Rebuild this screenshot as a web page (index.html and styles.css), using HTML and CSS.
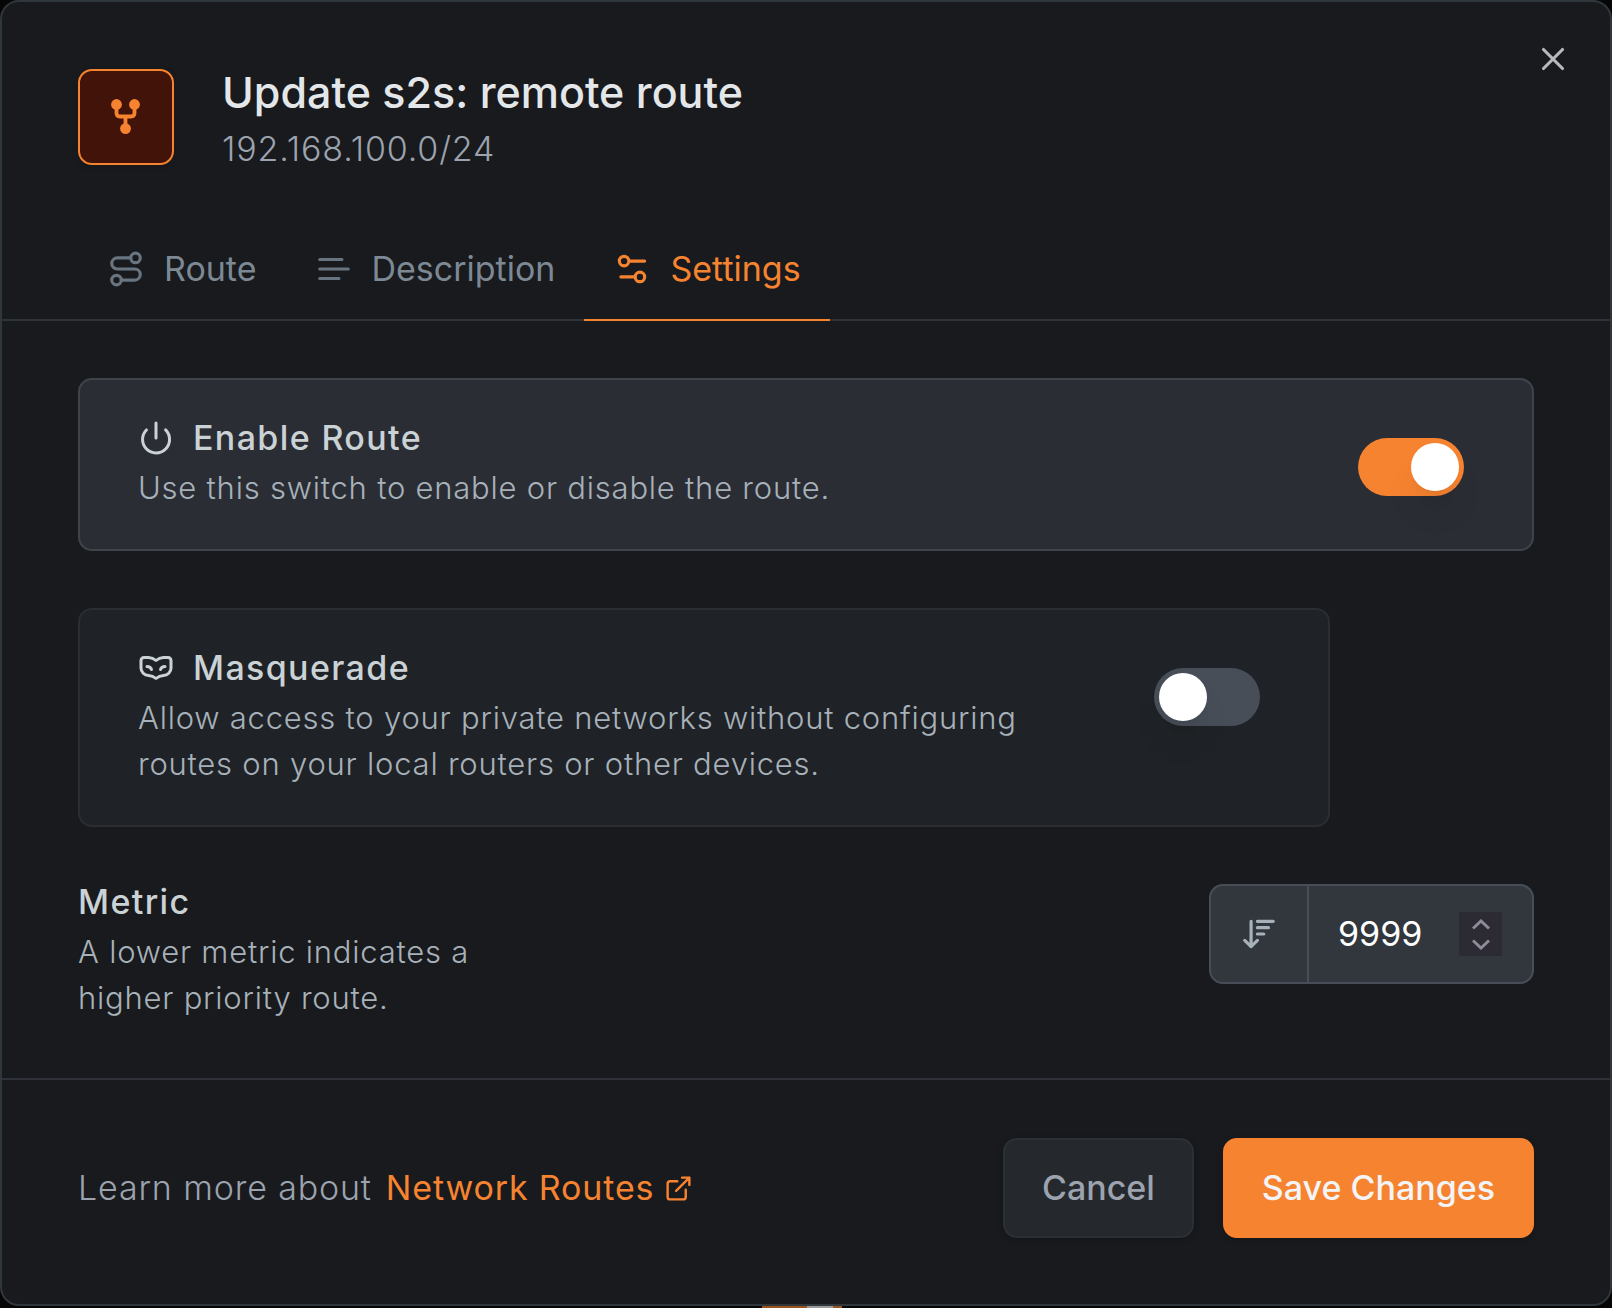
FILE: index.html
```html
<!DOCTYPE html>
<html lang="en">
<head>
<meta charset="utf-8">
<meta name="viewport" content="width=device-width, initial-scale=1">
<title>Update s2s: remote route</title>
<link rel="stylesheet" href="styles.css">
</head>
<body>
<main class="dialog" role="dialog" aria-labelledby="dialog-title">
  <button class="close" type="button" aria-label="Close">
    <svg class="icon icon-lg" viewBox="0 0 24 24"><path d="M18 6 6 18M6 6l12 12"/></svg>
  </button>

  <header class="header">
    <div class="badge">
      <svg class="fork" viewBox="0 0 30 36">
        <path d="M5.500 6V14Q5.500 17.500 9 17.500H20Q23.500 17.500 23.500 14V6M14.500 17.500V30" fill="none" stroke="currentColor" stroke-width="3.800"/>
        <circle cx="5.500" cy="5.500" r="5.400" fill="currentColor"/>
        <circle cx="23.500" cy="5.500" r="5.400" fill="currentColor"/>
        <circle cx="14.500" cy="29.600" r="5.400" fill="currentColor"/>
      </svg>
    </div>
    <div>
      <h1 class="title" id="dialog-title">Update s2s: remote route</h1>
      <p class="subtitle">192.168.100.0/24</p>
    </div>
  </header>

  <div class="tabs" role="tablist">
    <button class="tab" type="button" role="tab">
      <svg class="icon icon-lg" viewBox="0 0 24 24"><circle cx="6" cy="19" r="3"/><path d="M9 19h8.500a3.500 3.500 0 0 0 0-7h-11a3.500 3.500 0 0 1 0-7H15"/><circle cx="18" cy="5" r="3"/></svg>
      Route
    </button>
    <button class="tab" type="button" role="tab">
      <svg class="icon icon-lg" viewBox="0 0 24 24"><path d="M17 6H3M21 12H3M15.100 18H3"/></svg>
      Description
    </button>
    <button class="tab tab-active" type="button" role="tab" aria-selected="true">
      <svg class="icon icon-lg" viewBox="0 0 24 24"><path d="M20 7h-9M14 17H5"/><circle cx="17" cy="17" r="3"/><circle cx="7" cy="7" r="3"/></svg>
      Settings
    </button>
  </div>

  <section class="body">
    <div class="card card-on">
      <div class="card-text">
        <label class="label" for="enable-route">
          <svg class="icon icon-md" viewBox="0 0 24 24"><path d="M12 2v10M18.400 6.600a9 9 0 1 1-12.770.040"/></svg>
          Enable Route
        </label>
        <p class="help">Use this switch to enable or disable the route.</p>
      </div>
      <input class="switch" type="checkbox" role="switch" id="enable-route" checked>
    </div>

    <div class="card card-off">
      <div class="card-text">
        <label class="label" for="masquerade">
          <svg class="icon icon-md" viewBox="0 0 24 24"><path d="M2 12a5 5 0 0 0 5 5 8 8 0 0 1 5 2 8 8 0 0 1 5-2 5 5 0 0 0 5-5V7a2 2 0 0 0-2-2h-3a8 8 0 0 0-5 2 8 8 0 0 0-5-2H4a2 2 0 0 0-2 2Z"/><path d="M6 11c1.500 0 2.500.500 3 2M18 11c-1.500 0-2.500.500-3 2"/></svg>
          Masquerade
        </label>
        <p class="help">Allow access to your private networks without configuring routes on your local routers or other devices.</p>
      </div>
      <input class="switch" type="checkbox" role="switch" id="masquerade">
    </div>

    <div class="metric">
      <div class="metric-text">
        <label class="label" for="metric">Metric</label>
        <p class="help">A lower metric indicates a higher priority route.</p>
      </div>
      <div class="number">
        <span class="prefix">
          <svg class="icon icon-lg" viewBox="0 0 24 24"><path d="m3 16 4 4 4-4M7 20V4M11 4h10M11 8h7M11 12h4"/></svg>
        </span>
        <input class="number-input" type="number" id="metric" value="9999">
        <span class="stepper">
          <button class="step" type="button" aria-label="Increase"><svg class="chevron" viewBox="0 0 18 11"><path d="M1 9.500 9 2l8 7.500"/></svg></button>
          <button class="step" type="button" aria-label="Decrease"><svg class="chevron" viewBox="0 0 18 11"><path d="M1 1.500 9 9l8-7.500"/></svg></button>
        </span>
      </div>
    </div>
  </section>

  <footer class="footer">
    <p class="learn">Learn more about
      <a class="link" href="#network-routes">Network Routes
        <svg class="icon icon-sm" viewBox="0 0 24 24"><path d="M15 3h6v6M10 14 21 3M18 13v6a2 2 0 0 1-2 2H5a2 2 0 0 1-2-2V8a2 2 0 0 1 2-2h6"/></svg>
      </a>
    </p>
    <div class="actions">
      <button class="button cancel" type="button">Cancel</button>
      <button class="button save" type="button">Save Changes</button>
    </div>
  </footer>
</main>
<div class="underlay" aria-hidden="true"><span class="underlay-switch"><span class="underlay-knob"></span></span></div>
</body>
</html>
```
FILE: styles.css
```css
* {
  box-sizing: border-box;
}

body {
  margin: 0;
  background: #060607;
  color: #e4e7e9;
  font-family: Inter, "Liberation Sans", sans-serif;
  font-size: 34px;
  line-height: 40px;
}

h1,
p {
  margin: 0;
}

button,
input {
  margin: 0;
  font: inherit;
}

button {
  padding: 0;
  border: 0;
  background: none;
  color: inherit;
  cursor: pointer;
}

.dialog {
  position: relative;
  border: 2px solid #2f363c;
  border-radius: 19px;
  background: #181a1d;
}

.icon {
  flex: none;
  fill: none;
  stroke: currentColor;
  stroke-width: 2;
  stroke-linecap: round;
  stroke-linejoin: round;
}

.icon-sm {
  width: 29px;
  height: 29px;
}

.icon-md {
  width: 36px;
  height: 36px;
}

.icon-lg {
  width: 38px;
  height: 38px;
}

.close {
  position: absolute;
  top: 38px;
  right: 38px;
  display: flex;
  color: #b8b9bb;
}

.header {
  display: flex;
  align-items: flex-start;
  gap: 48px;
  padding: 67px 76px 54px;
}

.badge {
  display: flex;
  align-items: center;
  justify-content: center;
  width: 96px;
  height: 96px;
  border: 2px solid #f68330;
  border-radius: 14px;
  background: #421309;
  color: #f68330;
  box-shadow: 0 2px 7px rgba(0, 0, 0, 0.1);
}

.fork {
  width: 30px;
  height: 36px;
}

.title {
  font-size: 43px;
  font-weight: 500;
  line-height: 46px;
}

.subtitle {
  margin-top: 14px;
  color: #9ca3af;
  font-weight: 300;
  letter-spacing: 0.025em;
}

.tabs {
  display: flex;
  padding: 0 76px;
  border-bottom: 2px solid #2f343a;
}

.tab {
  display: flex;
  align-items: center;
  gap: 19px;
  height: 98px;
  margin-bottom: -2px;
  padding: 0 29px 4px;
  border-bottom: 2px solid transparent;
  color: #7c8994;
}

.tab .icon {
  color: #687480;
}

.tab-active,
.tab-active .icon {
  border-color: #f68330;
  color: #f68330;
}

.tab.tab-active .icon {
  color: #f68330;
}

.body {
  display: flex;
  flex-direction: column;
  gap: 57px;
  padding: 57px 76px;
}

.card {
  display: flex;
  align-items: flex-start;
  justify-content: space-between;
  padding: 38px 68px 38px 58px;
  border: 2px solid;
  border-radius: 14px;
}

.card-on {
  border-color: #3f444b;
  background: #2b2d35;
}

.card-off {
  width: 86%;
  border-color: #2b2d31;
  background: #1f2226;
}

.card-text {
  max-width: 900px;
}

.label {
  display: flex;
  align-items: center;
  gap: 19px;
  color: #cbd2d6;
  font-weight: 500;
  letter-spacing: 0.04em;
}

.help {
  margin-top: 7px;
  color: #a7b1b9;
  font-size: 31px;
  font-weight: 300;
  line-height: 46px;
  letter-spacing: 0.025em;
}

.switch {
  flex: none;
  width: 106px;
  height: 58px;
  margin-top: 20px;
  padding: 5px;
  border-radius: 29px;
  background: #474e58;
  appearance: none;
}

.switch::before {
  display: block;
  width: 48px;
  height: 48px;
  border-radius: 50%;
  background: #fff;
  box-shadow: 0 24px 36px -7px rgba(0, 0, 0, 0.1), 0 10px 14px -10px rgba(0, 0, 0, 0.1);
  content: "";
}

.switch:checked {
  background: #f68330;
}

.switch:checked::before {
  margin-left: auto;
}

.metric {
  display: flex;
  align-items: flex-start;
  justify-content: space-between;
}

.metric-text {
  max-width: 480px;
  margin-top: -2px;
}

.number {
  display: flex;
  align-items: center;
  width: 325px;
  height: 100px;
  border: 2px solid #474e57;
  border-radius: 14px;
  background: #32363d;
}

.prefix {
  display: flex;
  align-items: center;
  justify-content: center;
  align-self: stretch;
  width: 98px;
  border-right: 2px solid #474e57;
  color: #a7b1b9;
}

.number-input {
  flex: 1;
  min-width: 0;
  padding: 0 0 0 29px;
  border: 0;
  outline: 0;
  background: none;
  color: #fff;
  appearance: textfield;
}

.stepper {
  display: flex;
  flex-direction: column;
  width: 43px;
  height: 44px;
  margin-right: 30px;
  padding: 2px 0;
  background: #2c2a33;
  color: #8f8c99;
}

.step {
  display: flex;
  flex: 1;
  align-items: center;
  justify-content: center;
}

.chevron {
  width: 18px;
  height: 11px;
  fill: none;
  stroke: currentColor;
  stroke-width: 3;
}

.footer {
  display: flex;
  align-items: center;
  justify-content: space-between;
  padding: 58px 76px 66px;
  border-top: 2px solid #2f3238;
}

.learn {
  display: flex;
  align-items: center;
  gap: 14px;
  color: #9ca3af;
  font-weight: 300;
  letter-spacing: 0.025em;
}

.link {
  display: flex;
  align-items: center;
  gap: 10px;
  color: #f68330;
  font-weight: 400;
  text-decoration: none;
}

.actions {
  display: flex;
  gap: 29px;
}

.button {
  height: 100px;
  padding: 0 37px;
  border: 2px solid;
  border-radius: 14px;
  font-weight: 500;
  box-shadow: 0 2px 7px rgba(0, 0, 0, 0.2);
}

.cancel {
  border-color: #2b3037;
  background: #25282d;
  color: #9ca3af;
}

.save {
  border-color: #f68330;
  background: #f68330;
  color: #f3f4f6;
}

.underlay {
  display: flex;
  height: 2px;
  padding-left: 762px;
}

.underlay-switch {
  display: flex;
  justify-content: flex-end;
  width: 80px;
  padding-right: 9px;
  background: #9a5420;
}

.underlay-knob {
  width: 26px;
  background: #9a9a9a;
}
```
